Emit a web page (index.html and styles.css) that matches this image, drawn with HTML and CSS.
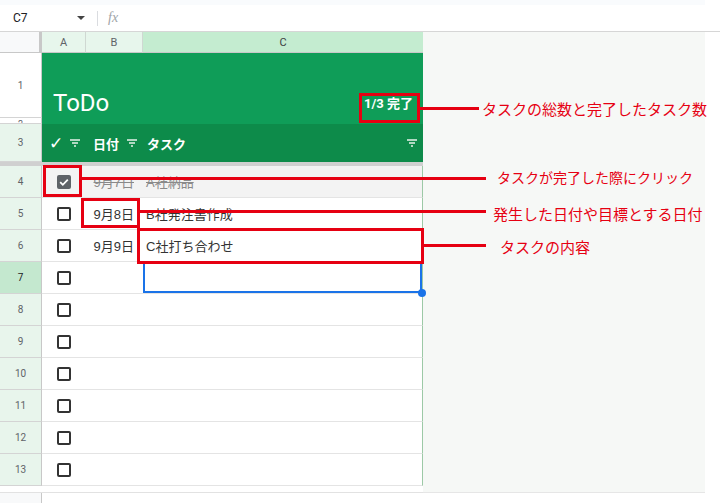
FILE: index.html
```html
<!DOCTYPE html>
<html lang="ja">

<head>
    <meta charset="UTF-8">
    <title>ToDo</title>
    <link rel="stylesheet" href="styles.css">
</head>

<body>
    <div class="app">
        <div class="topstrip"></div>

        <!-- formula bar -->
        <div class="fbar">
            <div class="namebox">
                <span>C7</span>
                <span class="caret"></span>
            </div>
            <span class="sep"></span>
            <span class="fx">fx</span>
        </div>

        <div class="main">
            <div class="sheet">
                <!-- column headers -->
                <div class="corner"></div>
                <div class="colh">A</div>
                <div class="colh">B</div>
                <div class="colh sel">C</div>

                <!-- rows 1-3 -->
                <div class="rh plain">1</div>
                <div class="title">
                    <span class="todo">ToDo</span>
                    <span class="count">1/3 完了</span>
                </div>
                <div class="rh plain small">2</div>
                <div class="rh">3</div>
                <div class="head ha"><span class="tick">✓</span><svg class="flt" viewBox="0 0 10 8"><path d="M0 1h10M2 4h6M4 7h2" /></svg></div>
                <div class="head hb"><span>日付</span><svg class="flt" viewBox="0 0 10 8"><path d="M0 1h10M2 4h6M4 7h2" /></svg></div>
                <div class="head hc"><span>タスク</span><svg class="flt" viewBox="0 0 10 8"><path d="M0 1h10M2 4h6M4 7h2" /></svg></div>

                <div class="freeze"></div>

                <!-- data rows -->
                <div class="rh">4</div>
                <div class="c ca done"><span class="cbx on"><svg viewBox="0 0 14 14"><path d="M3.2 7.2l2.6 2.6 5-5.2" /></svg></span></div>
                <div class="c cb done"><s>9月7日</s></div>
                <div class="c cc done"><s>A社納品</s></div>

                <div class="rh">5</div>
                <div class="c ca"><span class="cbx"></span></div>
                <div class="c cb">9月8日</div>
                <div class="c cc">B社発注書作成</div>

                <div class="rh">6</div>
                <div class="c ca"><span class="cbx"></span></div>
                <div class="c cb">9月9日</div>
                <div class="c cc">C社打ち合わせ</div>

                <div class="rh sel">7</div>
                <div class="c ca"><span class="cbx"></span></div>
                <div class="c cb"></div>
                <div class="c cc cur"><span class="handle"></span></div>

                <div class="rh">8</div>
                <div class="c ca"><span class="cbx"></span></div>
                <div class="c cb"></div>
                <div class="c cc"></div>

                <div class="rh">9</div>
                <div class="c ca"><span class="cbx"></span></div>
                <div class="c cb"></div>
                <div class="c cc"></div>

                <div class="rh">10</div>
                <div class="c ca"><span class="cbx"></span></div>
                <div class="c cb"></div>
                <div class="c cc"></div>

                <div class="rh">11</div>
                <div class="c ca"><span class="cbx"></span></div>
                <div class="c cb"></div>
                <div class="c cc"></div>

                <div class="rh">12</div>
                <div class="c ca"><span class="cbx"></span></div>
                <div class="c cb"></div>
                <div class="c cc"></div>

                <div class="rh">13</div>
                <div class="c ca"><span class="cbx"></span></div>
                <div class="c cb"></div>
                <div class="c cc"></div>

                <div class="tail"></div>
            </div>
            <div class="outside"></div>
        </div>

        <div class="foot">
            <div class="foot-rh"></div>
        </div>

        <!-- annotations -->
        <div class="mark m1"></div>
        <div class="mark m2"></div>
        <div class="mark m3"></div>
        <div class="mark m4"></div>
        <div class="lead l1"></div>
        <div class="lead l2"></div>
        <div class="lead l3"></div>
        <div class="lead l4"></div>
        <div class="note n1">タスクの総数と完了したタスク数</div>
        <div class="note n2">タスクが完了した際にクリック</div>
        <div class="note n3">発生した日付や目標とする日付</div>
        <div class="note n4">タスクの内容</div>
    </div>
</body>

</html>
```

FILE: styles.css
```css
body {
    margin: 0;
    background: #fff;
    font-family: Roboto, "Liberation Sans", "Noto Sans CJK JP", sans-serif;
}

.app {
    position: relative;
    width: 720px;
    height: 503px;
    overflow: hidden;
}

.topstrip {
    width: 705px;
    height: 5px;
    background: #f9fbfd;
}

/* formula bar */
.fbar {
    display: flex;
    align-items: center;
    height: 26px;
    border-bottom: 1px solid #d6d6d6;
    font-size: 12px;
    color: #202124;
}

.namebox {
    display: flex;
    align-items: center;
    justify-content: space-between;
    width: 88px;
    padding: 0 3px 0 13px;
    box-sizing: border-box;
}

.caret {
    width: 0;
    height: 0;
    border-left: 4px solid transparent;
    border-right: 4px solid transparent;
    border-top: 4px solid #444;
}

.sep {
    width: 1px;
    height: 15px;
    margin-left: 9px;
    background: #dadce0;
}

.fx {
    margin-left: 10px;
    font-family: "Liberation Serif", serif;
    font-style: italic;
    font-size: 14px;
    color: #a0a4a8;
}

.main {
    display: flex;
    height: 461px;
}

.sheet {
    display: grid;
    width: 423px;
    grid-template-columns: 42px 44px 57px 280px;
    grid-template-rows: 21px 65px 6px 38px 4px repeat(10, 32px) 7px;
}

.outside {
    width: 282px;
    background: #f6f8f6;
    border-bottom: 1px solid #e6e6e6;
    box-sizing: border-box;
}

/* headers */
.corner {
    background: #f8f9fa;
    border-right: 3px solid #c8c8c8;
    border-bottom: 1px solid #c8c8c8;
}

.colh {
    display: flex;
    align-items: center;
    justify-content: center;
    font-size: 11px;
    color: #5f6368;
    background: #e7f6ec;
    border-right: 1px solid #cfd8d2;
    border-bottom: 1px solid #c8c8c8;
}

.colh.sel {
    background: #c4ecd0;
    border-right: 0;
    color: #3c4043;
}

.rh {
    display: flex;
    align-items: center;
    justify-content: center;
    overflow: hidden;
    font-size: 10px;
    color: #5f6368;
    background: #e8f5ec;
    border-right: 1px solid #c8c8c8;
    border-bottom: 1px solid #d4d4d4;
}

.rh.plain {
    background: #fff;
}

.rh.small {
    align-items: flex-start;
    padding-top: 1px;
    font-size: 9px;
    line-height: 10px;
    box-sizing: border-box;
}

.rh.sel {
    background: #c4e8cf;
    color: #202124;
}

/* title band */
.title {
    grid-column: 2 / 5;
    grid-row: 2 / 4;
    display: flex;
    align-items: flex-end;
    justify-content: space-between;
    padding: 0 10px 9px 11px;
    background: #0f9d58;
    color: #fff;
}

.todo {
    font-size: 24px;
    line-height: 24px;
}

.count {
    margin-bottom: 3px;
    font-size: 13px;
    font-weight: bold;
    line-height: 16px;
}

.head {
    display: flex;
    align-items: center;
    justify-content: space-between;
    padding: 0 6px 0 7px;
    background: #0d8b4a;
    color: #fff;
    font-family: "Noto Sans CJK JP", sans-serif;
    font-size: 13px;
    font-weight: bold;
}

.head.hc {
    padding-left: 4px;
}

.tick {
    font-family: "DejaVu Sans", sans-serif;
    font-size: 17px;
    font-weight: bold;
}

.flt {
    width: 10px;
    height: 8px;
    fill: none;
    stroke: #e6f2ea;
    stroke-width: 1.3;
}

.freeze {
    grid-column: 1 / 5;
    background: #d0d0d0;
}

/* data cells */
.c {
    display: flex;
    align-items: center;
    font-family: "Liberation Sans", "Noto Sans CJK JP", sans-serif;
    font-size: 13px;
    color: #333;
    border-bottom: 1px solid #e4e4e4;
}

.ca {
    justify-content: center;
}

.cb {
    justify-content: flex-end;
    padding-right: 9px;
}

.cc {
    padding-left: 3px;
    border-right: 1px solid #9cc9a6;
}

.done {
    background: #f3f3f3;
    color: #8a8a8a;
}

.cbx {
    display: block;
    width: 14px;
    height: 14px;
    border: 2px solid #333;
    border-radius: 2px;
    box-sizing: border-box;
}

.cbx.on {
    background: #5f6368;
    border-color: #5f6368;
    position: relative;
}

.cbx.on svg {
    position: absolute;
    left: -2px;
    top: -2px;
    width: 14px;
    height: 14px;
    fill: none;
    stroke: #fff;
    stroke-width: 1.8;
}

.cur {
    position: relative;
    box-shadow: inset 0 0 0 2px #1a73e8;
}

.handle {
    position: absolute;
    right: -4px;
    bottom: -4px;
    width: 8px;
    height: 8px;
    border-radius: 50%;
    background: #1a73e8;
}

.tail {
    grid-column: 1 / 5;
    border-bottom: 1px solid #e2e2e2;
}

.foot {
    display: flex;
    height: 10px;
}

.foot-rh {
    width: 42px;
    background: #f8f9fa;
    border-right: 1px solid #c8c8c8;
    box-sizing: border-box;
}

/* red callouts */
.mark {
    position: absolute;
    border: 3px solid #e60012;
    box-sizing: border-box;
}

.m1 { left: 359px; top: 93px; width: 61px; height: 30px; }
.m2 { left: 43px; top: 165px; width: 39px; height: 32px; }
.m3 { left: 81px; top: 198px; width: 59px; height: 30px; }
.m4 { left: 137px; top: 228px; width: 287px; height: 36px; }

.lead {
    position: absolute;
    height: 3px;
    background: #e60012;
}

.l1 { left: 419px; top: 107px; width: 60px; }
.l2 { left: 81px; top: 177px; width: 405px; }
.l3 { left: 139px; top: 210px; width: 347px; }
.l4 { left: 423px; top: 244px; width: 63px; }

.note {
    position: absolute;
    font-family: "Noto Sans CJK JP", sans-serif;
    font-size: 15px;
    line-height: 20px;
    color: #e60012;
    white-space: nowrap;
}

.n1 { left: 482px; top: 99px; }
.n2 { left: 497px; top: 167px; font-size: 14px; }
.n3 { left: 493px; top: 204px; }
.n4 { left: 500px; top: 237px; }
```
